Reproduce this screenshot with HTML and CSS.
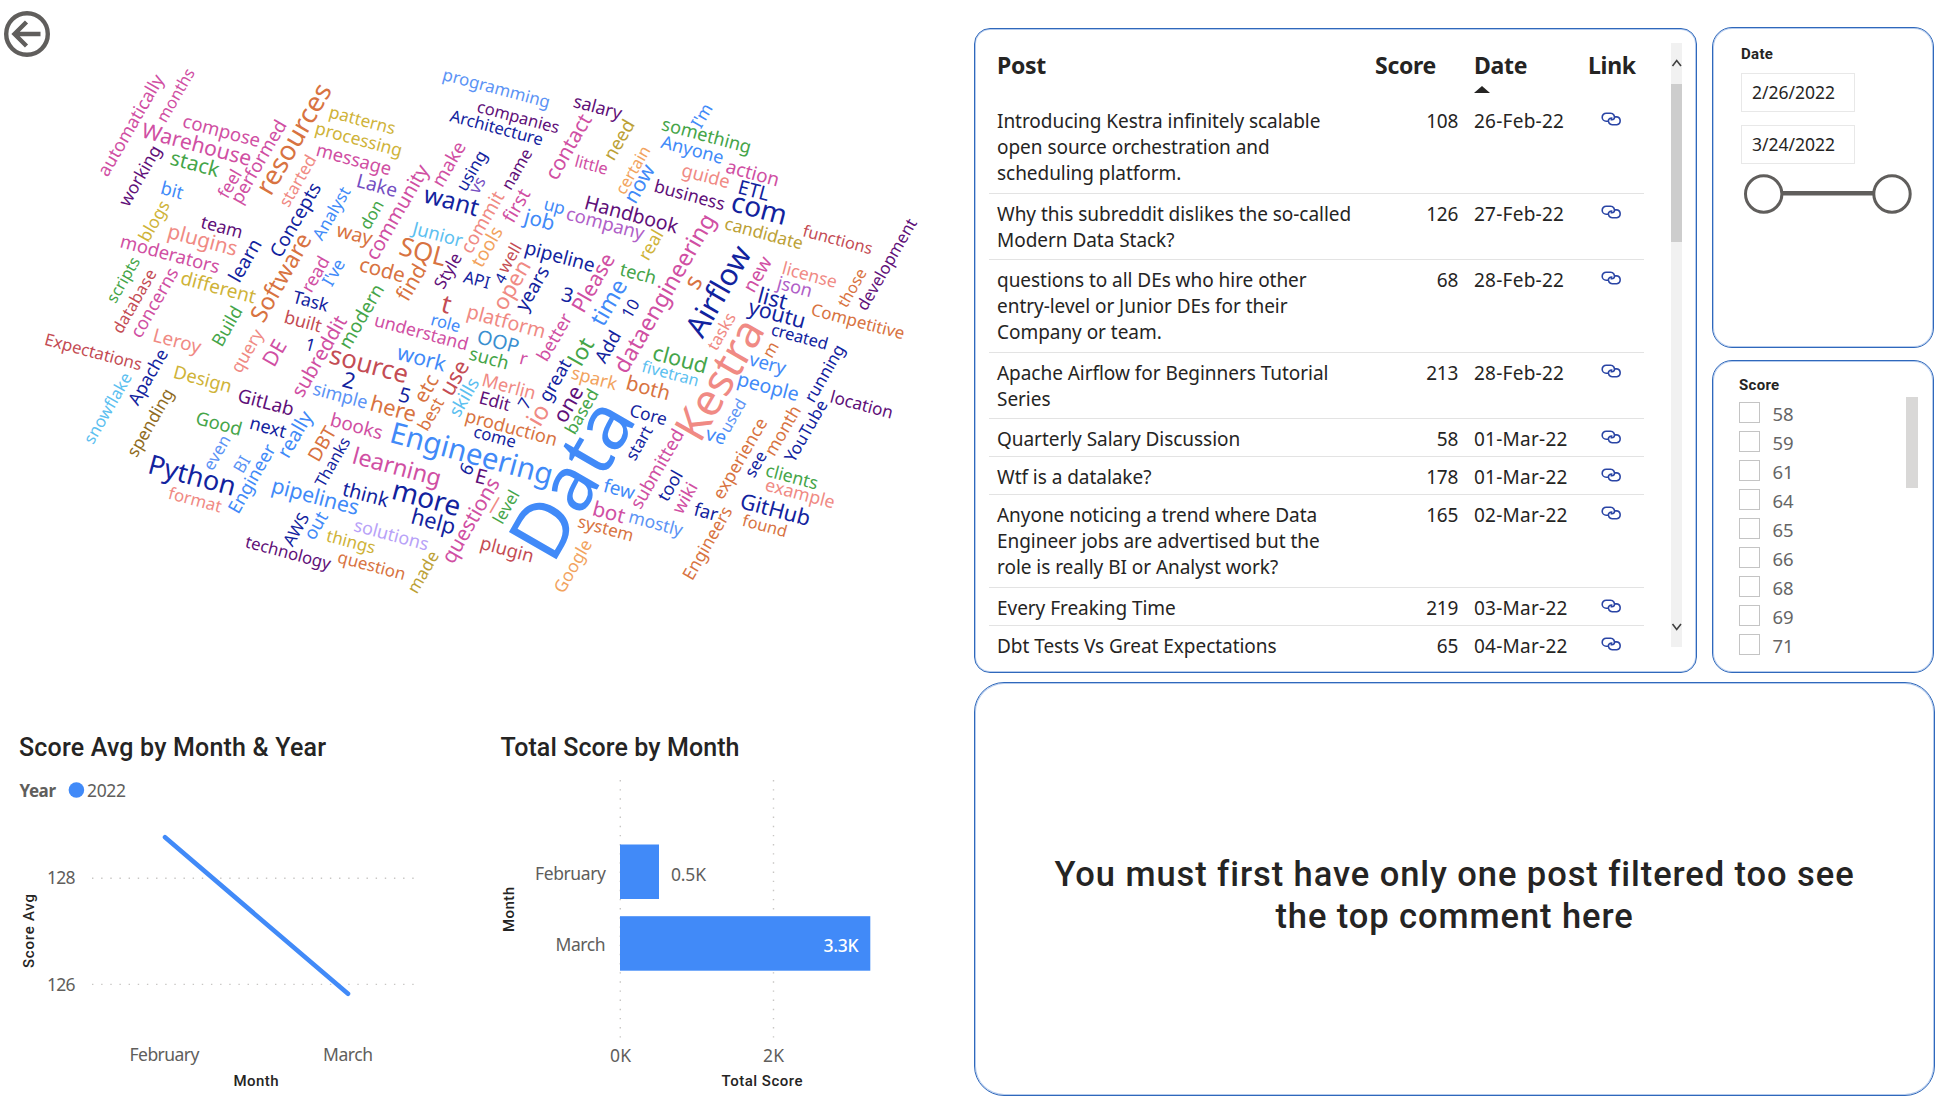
FILE: index.html
```html
<!DOCTYPE html>
<html lang="en">
<head>
<meta charset="utf-8">
<title>Data Engineering Posts</title>
<link rel="stylesheet" href="styles.css">
</head>
<body>
<svg class="defs" width="0" height="0">
  <symbol id="link" viewBox="0 0 21 14">
    <path d="M7.2 9.2H5.2A4 4 0 0 1 5.2 1.2H9.6A3.9 3.9 0 0 1 13.2 6.6A3.4 3.4 0 0 1 9.6 7.6"/>
    <path d="M13.8 4.9H15.8A4 4 0 0 1 15.8 12.8H11.2A3.9 3.9 0 0 1 7.7 7.4A3.4 3.4 0 0 1 11.4 6.3"/>
  </symbol>
</svg>
<main class="report">
  <section class="left">
    <div class="cloud-wrap">
      <svg class="cloud" id="cloud" width="974" height="720"></svg>
      <svg class="back" width="48" height="48" viewBox="0 0 48 48">
        <circle cx="24" cy="24" r="20.8"/>
        <path d="M37.5 24H12M23.5 12L11.5 24L23.5 36"/>
      </svg>
    </div>
    <div class="charts">
      <svg class="chart" width="480" height="386">
        <text class="title" x="19" y="35.7" textLength="307">Score Avg by Month &amp; Year</text>
        <text class="legend" x="19.5" y="77" textLength="36.5">Year</text>
        <circle class="mark" cx="76.4" cy="70" r="7.8"/>
        <text class="axis" x="87" y="77" textLength="39">2022</text>
        <path class="grid-line" d="M92 158.2H414M92 264.4H414"/>
        <text class="axis" x="47" y="164" textLength="28.5">128</text>
        <text class="axis" x="47" y="271" textLength="28.5">126</text>
        <path class="series" d="M165 117.3L348 273.8"/>
        <text class="axis" x="129.5" y="341" textLength="70">February</text>
        <text class="axis" x="323" y="341" textLength="50">March</text>
        <text class="axis-title" x="233.5" y="366" textLength="45">Month</text>
        <text class="axis-title" transform="translate(34 248) rotate(-90)" textLength="74">Score Avg</text>
      </svg>
      <svg class="chart" width="480" height="386">
        <text class="title" x="20.5" y="35.7" textLength="239">Total Score by Month</text>
        <path class="grid-line" d="M140.3 60V319M293.5 60V319"/>
        <rect class="mark" x="140" y="124.5" width="39" height="54.5"/>
        <rect class="mark" x="140" y="196.2" width="250.3" height="54.5"/>
        <text class="axis" x="55" y="160" textLength="71">February</text>
        <text class="axis" x="75.5" y="231" textLength="50">March</text>
        <text class="axis" x="191" y="161" textLength="35">0.5K</text>
        <text class="axis inside" x="343.5" y="232" textLength="35">3.3K</text>
        <text class="axis" x="130" y="342" textLength="21">0K</text>
        <text class="axis" x="283" y="342" textLength="21">2K</text>
        <text class="axis-title" x="241.5" y="366" textLength="81">Total Score</text>
        <text class="axis-title" transform="translate(34 212) rotate(-90)" textLength="45">Month</text>
      </svg>
    </div>
  </section>

  <section class="right">
    <div class="top">
      <div class="panel posts">
        <div class="table">
          <div class="row head"><b>Post</b><b class="num">Score</b><b class="date">Date<i class="sort"></i></b><b class="link">Link</b></div>
          <div class="row r3"><span>Introducing Kestra infinitely scalable<br>open source orchestration and<br>scheduling platform.</span><span class="num">108</span><span class="date">26-Feb-22</span><svg class="icon"><use href="#link"/></svg></div>
          <div class="row r2"><span>Why this subreddit dislikes the so-called<br>Modern Data Stack?</span><span class="num">126</span><span class="date">27-Feb-22</span><svg class="icon"><use href="#link"/></svg></div>
          <div class="row r3"><span>questions to all DEs who hire other<br>entry-level or Junior DEs for their<br>Company or team.</span><span class="num">68</span><span class="date">28-Feb-22</span><svg class="icon"><use href="#link"/></svg></div>
          <div class="row r2"><span>Apache Airflow for Beginners Tutorial<br>Series</span><span class="num">213</span><span class="date">28-Feb-22</span><svg class="icon"><use href="#link"/></svg></div>
          <div class="row r1"><span>Quarterly Salary Discussion</span><span class="num">58</span><span class="date">01-Mar-22</span><svg class="icon"><use href="#link"/></svg></div>
          <div class="row r1"><span>Wtf is a datalake?</span><span class="num">178</span><span class="date">01-Mar-22</span><svg class="icon"><use href="#link"/></svg></div>
          <div class="row r3"><span>Anyone noticing a trend where Data<br>Engineer jobs are advertised but the<br>role is really BI or Analyst work?</span><span class="num">165</span><span class="date">02-Mar-22</span><svg class="icon"><use href="#link"/></svg></div>
          <div class="row r1"><span>Every Freaking Time</span><span class="num">219</span><span class="date">03-Mar-22</span><svg class="icon"><use href="#link"/></svg></div>
          <div class="row r1 last"><span>Dbt Tests Vs Great Expectations</span><span class="num">65</span><span class="date">04-Mar-22</span><svg class="icon"><use href="#link"/></svg></div>
        </div>
        <div class="scroll">
          <svg width="11" height="41"><path d="M1.5 23L5.7 17.5L10 23"/></svg>
          <div class="thumb"></div>
          <svg class="down" width="11" height="41"><path d="M1.5 18L5.7 23.5L10 18"/></svg>
        </div>
      </div>
      <div class="side">
        <div class="panel dates">
          <h2>Date</h2>
          <div class="field">2/26/2022</div>
          <div class="field">3/24/2022</div>
          <svg class="slider" width="172" height="42">
            <path d="M41 20.3H132"/>
            <circle cx="22.7" cy="21" r="18.2"/><circle cx="151" cy="21" r="18.2"/>
          </svg>
        </div>
        <div class="panel scores">
          <div>
            <h2>Score</h2>
            <ul>
              <li><i></i>58</li><li><i></i>59</li><li><i></i>61</li><li><i></i>64</li><li><i></i>65</li>
              <li><i></i>66</li><li><i></i>68</li><li><i></i>69</li><li><i></i>71</li>
            </ul>
          </div>
          <div class="score-thumb"></div>
        </div>
      </div>
    </div>
    <div class="panel message">
      <p>You must first have only one post filtered too see<br>the top comment here</p>
    </div>
  </section>
</main>
<script src="cloud.js"></script>
</body>
</html>
```
FILE: styles.css
```css
* { box-sizing: border-box; }
body { margin: 0; background: #fff; color: #252423; font-family: "Noto Sans", "Open Sans", sans-serif; }
.defs { position: absolute; }
.report { display: grid; grid-template-columns: 974px 962px; width: 1946px; height: 1106px; overflow: hidden; }

.cloud-wrap { position: relative; height: 720px; }
.cloud { display: block; font-family: "Noto Sans", "Open Sans", sans-serif; }
.back { position: absolute; left: 3.4px; top: 10px; fill: none; stroke: #605e5c; stroke-width: 4.4; }
.charts { display: flex; }
.chart { display: block; }
.title, .axis-title { font-family: Roboto, sans-serif; font-weight: 500; fill: #252423; }
.title { font-size: 25px; }
.axis-title { font-size: 15px; }
.axis { font-size: 17.5px; fill: #605e5c; }
.legend { font-size: 17px; font-weight: 700; fill: #605e5c; }
.inside { fill: #fff; font-weight: 500; }
.mark { fill: #418af8; }
.series { fill: none; stroke: #418af8; stroke-width: 4.6; stroke-linecap: round; }
.grid-line { stroke: #c8c6c4; stroke-width: 1.4; stroke-dasharray: 1.4 7.75; }

.right { display: flex; flex-direction: column; gap: 9px; padding-top: 26px; }
.top { display: flex; gap: 15px; height: 647px; }
.panel { border: 1px solid #2f68bb; box-shadow: inset 0 0 0 1px rgba(70, 125, 210, 0.4); background: #fff; }
.posts { display: flex; width: 723px; margin-top: 2px; border-radius: 16px; padding: 14px 0 0 14px; }
.table { width: 655px; }
.row { display: grid; grid-template-columns: 411px 50px 114px 1fr; padding: 7px 0 0 8px; border-bottom: 1.5px solid #e3e3e3; font-size: 19px; line-height: 26.2px; letter-spacing: -0.04px; white-space: nowrap; }
.num { text-align: right; letter-spacing: -0.3px; }
.date { padding-left: 16px; letter-spacing: 0.25px; }
.head { height: 58px; padding-top: 9px; border: 0; font-size: 23px; letter-spacing: -0.3px; }
.head .num { direction: rtl; margin-right: 22px; margin-left: -60px; }
.head .date { position: relative; letter-spacing: -0.3px; }
.head .link { padding-left: 16px; }
.sort { position: absolute; left: 16px; top: 34px; border: 8.5px solid transparent; border-top: 0; border-bottom: 7px solid #252423; }
.r1 { height: 38px; }
.r2 { height: 66px; }
.r3 { height: 93px; }
.last { border: 0; }
.icon { width: 21px; height: 14px; margin: 4px 0 0 29px; fill: none; stroke: #2a45a5; stroke-width: 1.6; }
.scroll { display: flex; flex-direction: column; width: 11px; height: 604px; margin-left: 27px; background: #f1f1f1; fill: none; stroke: #404040; stroke-width: 1.6; }
.thumb { height: 158px; background: #cdcdcd; }
.down { margin-top: auto; }

.side { display: flex; flex-direction: column; gap: 12px; width: 222px; padding-top: 1px; }
.dates { height: 321px; border-radius: 20px; padding: 16px 0 0 28px; }
h2 { margin: 0; font: 700 15px/20px Roboto, sans-serif; letter-spacing: 0.3px; }
.field { width: 114px; height: 39px; margin-top: 9px; border: 1.5px solid #e8e8e8; padding-left: 10px; font-size: 17.5px; line-height: 36px; letter-spacing: 0; }
.field + .field { margin-top: 12.5px; }
.slider { display: block; margin-top: 9px; fill: #fff; stroke: #605e5c; stroke-width: 3; }
.slider path { stroke-width: 4.5; }
.scores { display: flex; justify-content: space-between; height: 313px; border-radius: 20px; padding: 14px 15px 0 26px; }
ul { list-style: none; margin: 4px 0 0; padding: 0; }
li { display: flex; align-items: center; gap: 12.5px; height: 29px; font-size: 18.5px; line-height: 29px; letter-spacing: -0.2px; color: #666; }
li i { width: 21px; height: 21px; margin-top: -3px; border: 1.6px solid #c4c4c4; }
.score-thumb { width: 12.5px; height: 91px; margin-top: 22px; background: #d9d8d7; }
.message { display: flex; align-items: center; justify-content: center; width: 961px; height: 414px; border-radius: 30px; }
.message p { margin: 12px 0 0; font: 500 34.5px/42px Roboto, sans-serif; letter-spacing: 0.92px; text-align: center; }
```
FILE: cloud.js
```js
// Word cloud: every word sits on one of two orientations.
// Entry: word, colour key, baseline start x, start y, then where the baseline
// ends: an x for words tilted down, a y for words climbing up.
const COLORS = {
  m: '#d04fa3', n: '#12239e', o: '#d87341', p: '#5f1079', b: '#418af8', c: '#5b93f5',
  g: '#45a549', s: '#f08a84', y: '#cfb338', r: '#c44c54', k: '#5cc0f0', v: '#744ec2',
  w: '#b060c8', t: '#f2a35e', l: '#bca136', h: '#8f6b1e', e: '#3a8fd0', a: '#b8a2f8'
};
const DOWN = `compose m 182.5 127 257.5
Warehouse m 140.5 137 248.5
stack g 170 164.5 217
bit b 161 194 181
team p 200 227.5 239.5
plugins s 168 238 234.5
moderators m 120.5 247.5 217
different y 180.5 284 253.5
Task n 292 302.5 326.5
built r 284.5 323 319.5
1 n 305.5 350 310
source r 329 363 404.5
work b 396 359 443.5
Leroy s 153.5 341.5 199
Expectations r 45 345 139.5
Design y 174 378 228.5
GitLab p 237.5 401.5 291
Good g 195.5 424 238.5
next n 250 429 284
Python n 149 473.5 231
format s 167.5 498.5 219.5
pipelines b 272 492.5 356
technology p 244.5 547 329
things y 325.5 541 373
solutions a 353.5 531 426
question o 337.5 562.5 402.5
think n 341.5 495 386.5
more n 392.5 499 456.5
help n 411.5 523.5 452
learning m 353 463.5 437
books m 330.5 426 380
simple c 312.5 394.5 365
here o 370.5 410.5 413
2 n 342 386.5 352
5 n 398.5 401 407.5
such g 469 359.5 505.5
Merlin s 482.5 386 532.5
Edit p 479.5 403.5 508
r m 520 364 525.5
spark t 571 378.5 615
both o 626.5 389.5 666.5
OOP e 477 343 516
understand m 374.5 326 465
role b 431 325 458
platform s 467 318 542
t r 440 311.5 448
way o 335.5 236 370.5
code o 359 271 402
SQL o 399 254.5 443
Junior k 410 233.5 460.5
API n 462.5 282 487.5
pipeline n 525 254 592
3 n 561 300.5 570
job b 522 222.5 551.5
up b 544 209.5 562.5
company w 566 219.5 642.5
Handbook p 585 209 676
want n 422.5 202 476
Lake v 357 187 394.5
message m 316.5 156 388.5
processing y 315.5 134 399
patterns y 329.5 117.5 393
Architecture n 449 121 540.5
companies p 477 112 557
programming c 443 80 547
salary p 573 107 620
little m 575 166.5 605.5
something g 661.5 130 748
Anyone b 660 147.5 721
action m 725.5 172.5 776
guide s 681.5 176 727
business p 654.5 192 722.5
ETL n 738.5 193.5 767
com n 731 211 782
candidate l 724.5 229 800.5
functions r 802 236 870
license s 782.5 274 834.5
json w 775 288 809
list n 758 302.5 784.5
youtu n 747 313.5 801.5
created n 771 335 825
Competitive o 811 315 902
tech g 619 275 653
cloud g 652.5 359.5 703.5
fivetran k 641 371.5 696
very b 748 365 784
people b 737.5 385.5 796
ve b 704.5 439.5 723.5
location p 830.5 402.5 890
clients g 765.5 476 815.5
example s 765 490.5 832
GitHub n 740 508 807
found o 741.5 525.5 784
far n 693 515 716
Core n 629.5 416 664.5
few b 602.5 491.5 632.5
bot m 593 515.5 622.5
mostly c 629 522.5 681
system o 577.5 527 630.5
plugin r 480.5 549 530.5
Engineering b 391 442.5 547.5
production o 465.5 422 554
come n 473.5 437 513.5
E p 475.5 482.5 483.5`;
const UP = `automatically m 108 177 79
months m 166.5 122.5 73
performed m 241.5 204 126
feel m 227.5 199.5 175
resources o 272 195 91
working p 128.5 207.5 151
started s 289 207.5 160.5
Concepts n 281 258 188
Analyst b 322 241.5 191.5
blogs y 149 242 205.5
learn n 240 282.5 245
scripts g 116 303.5 261.5
database r 122 334 274
Software o 264 323 240
concerns m 141 338.5 273
Build g 222.5 346.5 312
read m 312 292.5 262
query s 241 373.5 333.5
DE m 275 366.5 346
subreddit m 303 398 321
Apache n 138 406.5 354
snowflake k 93.5 444.5 377.5
spending h 137 457.5 394
even c 213 471 440.5
BI c 243.5 473 460.5
Engineer b 239 513.5 449
really b 289 458 416
DBT o 319.5 461.5 431.5
Thanks n 324 488 442
AWS n 292.5 547.5 518
out b 314.5 540.5 516.5
made l 417.5 593.5 556
etc o 425.5 403.5 380
use r 452.5 396 366.5
best o 428 431 402.5
skills k 459.5 417.5 383
7 n 527.5 410 403
great n 549.5 402.5 364
lot g 582 366 344
better m 547.5 361.5 318
Add n 605 364.5 336.5
modern g 350 349 290
don g 369.5 230 205.5
find o 408 302.5 271
community m 377 260.5 169.5
Style p 444 289.5 258
4 n 503.5 284.5 277.5
well r 507 274 248.5
open s 505.5 311 267
years n 526 312.5 271.5
commit s 471.5 254 196.5
tools t 482 268.5 232
first m 513.5 224 194
name p 511.5 190 153.5
vs v 478 195 181.5
using n 466.5 191.5 156
make m 443 187 147
I've b 332 287 264
contact m 557 180.5 119.5
need l 614.5 160.3 125.5
certain t 625 195 151
now b 636 203.5 169.5
I'm b 701 129 109
development p 866.5 311 223
those o 846.5 308.5 273
new m 754.5 292.5 261.5
m o 772.5 358 347
tasks s 716.5 351.5 317.5
Airflow n 702.5 339.5 253.5
s o 698 290.5 282.2
real y 649 260.5 235.5
dataengineering m 627 374 221
10 n 631.5 318.5 304
time b 603.5 327.5 286
Please m 584.5 312.5 259.5
Kestra s 702 440.5 333
used c 729.5 433 404
running n 814.5 402.5 350
month o 775 456 411
YouTube n 794 463.5 405
experience o 723 500 423
see n 754.5 478 456
Engineers o 693 580 511.5
wiki m 682 515 488
tool n 667.5 502.5 476
submitted m 641 509.5 435
start n 635.5 461 430.5
Google t 564 593.5 544.5
level g 503 524 495.5
— s 494.7 515.5 500
questions m 453.5 564 483.5
6 n 470 476 468.5
io s 541 426.5 411
one p 565.5 423.5 392
based g 575.5 434.5 394.5
Data b 556.5 559.5 424`;

const cloud = document.getElementById('cloud');
const pen = document.createElement('canvas').getContext('2d');
pen.font = '200px "Noto Sans"';

function draw(list, angle) {
  const rad = Math.abs(angle) * Math.PI / 180;
  for (const line of list.split('\n')) {
    const [word, key, x, y, end] = line.split(' ');
    const length = angle > 0 ? (end - x) / Math.cos(rad) : (y - end) / Math.sin(rad);
    const ink = pen.measureText(word);
    const scale = length / (ink.actualBoundingBoxRight + ink.actualBoundingBoxLeft);
    const text = document.createElementNS('http://www.w3.org/2000/svg', 'text');
    text.textContent = word;
    text.setAttribute('x', (ink.actualBoundingBoxLeft * scale).toFixed(2));
    text.setAttribute('font-size', (200 * scale).toFixed(2));
    text.setAttribute('fill', COLORS[key]);
    text.setAttribute('transform', `translate(${x} ${y}) rotate(${angle})`);
    cloud.appendChild(text);
  }
}
draw(DOWN, 15);
draw(UP, -60);
```
